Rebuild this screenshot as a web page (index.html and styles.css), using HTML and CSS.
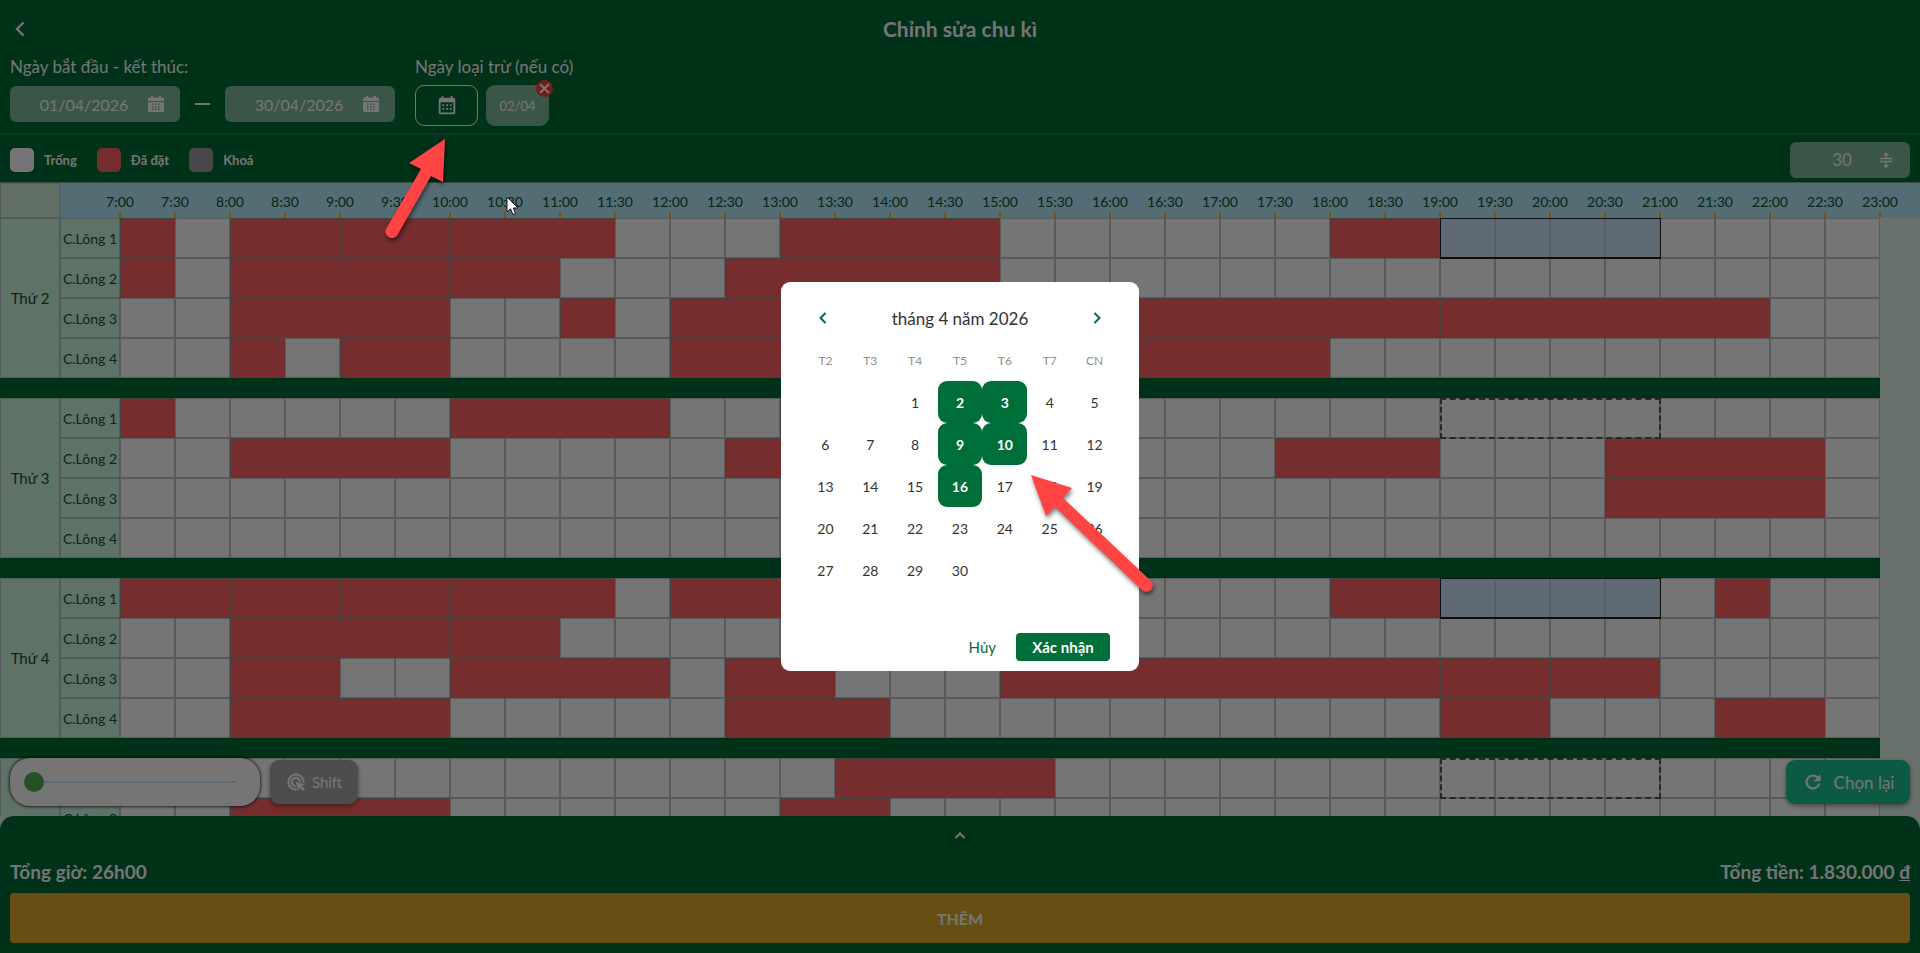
FILE: index.html
```html
<!DOCTYPE html>
<html lang="vi">
<head>
  <meta charset="utf-8">
  <title>Chỉnh sửa chu kì</title>
  <link rel="stylesheet" href="styles.css">
</head>
<body>
  <header class="topbar">
    <button class="back-btn" aria-label="Quay lại">
      <svg width="10" height="16" viewBox="0 0 10 16"><path d="M8.5 1.5L2 8l6.500 6.500" fill="none" stroke="currentColor" stroke-width="2.400"/></svg>
    </button>
    <h1 class="title">Chỉnh sửa chu kì</h1>
  </header>

  <section class="filters">
    <div class="filter-group">
      <label class="filter-label" for="startDate">Ngày bắt đầu - kết thúc:</label>
      <div class="filter-row">
        <div class="date-field">
          <input id="startDate" class="date-input" type="text" value="01/04/2026" readonly>
          <svg class="date-icon" viewBox="0 0 16 16"><path fill="currentColor" fill-rule="evenodd" d="M3 0h2v1.500h6V0h2v1.500h1.500A1.500 1.500 0 0 1 16 3v2H0V3a1.500 1.500 0 0 1 1.500-1.500H3zM0 6h16v8.500a1.500 1.500 0 0 1-1.500 1.500h-13A1.500 1.500 0 0 1 0 14.500zM7 7.500V9h1.500V7.500zM10 7.500V9h1.500V7.500zM4 10v1.500h1.500V10zM7 10v1.500h1.500V10zM10 10v1.500h1.500V10zM4 12.500V14h1.500v-1.500zM7 12.500V14h1.500v-1.500zM10 12.500V14h1.500v-1.500zM4 7.500V9h1.500V7.500z"/></svg>
        </div>
        <span class="dash"></span>
        <div class="date-field">
          <input id="endDate" class="date-input" type="text" value="30/04/2026" aria-label="Ngày kết thúc" readonly>
          <svg class="date-icon" viewBox="0 0 16 16"><path fill="currentColor" fill-rule="evenodd" d="M3 0h2v1.500h6V0h2v1.500h1.500A1.500 1.500 0 0 1 16 3v2H0V3a1.500 1.500 0 0 1 1.500-1.500H3zM0 6h16v8.500a1.500 1.500 0 0 1-1.500 1.500h-13A1.500 1.500 0 0 1 0 14.500zM7 7.500V9h1.500V7.500zM10 7.500V9h1.500V7.500zM4 10v1.500h1.500V10zM7 10v1.500h1.500V10zM10 10v1.500h1.500V10zM4 12.500V14h1.500v-1.500zM7 12.500V14h1.500v-1.500zM10 12.500V14h1.500v-1.500zM4 7.500V9h1.500V7.500z"/></svg>
        </div>
      </div>
    </div>

    <div class="filter-group">
      <span class="filter-label">Ngày loại trừ (nếu có)</span>
      <div class="filter-row exclude-row">
        <button class="exclude-btn" aria-label="Chọn ngày loại trừ">
          <svg width="22" height="22" viewBox="0 0 24 24"><path fill="currentColor" d="M9,10V12H7V10H9M13,10V12H11V10H13M17,10V12H15V10H17M19,3A2,2 0 0,1 21,5V19A2,2 0 0,1 19,21H5C3.890,21 3,20.100 3,19V5A2,2 0 0,1 5,3H6V1H8V3H16V1H18V3H19M19,19V8H5V19H19M9,14V16H7V14H9M13,14V16H11V14H13M17,14V16H15V14H17Z"/></svg>
        </button>
        <div class="exclude-chip">
          02/04
          <button class="chip-remove" aria-label="Xoá 02/04">
            <svg width="11" height="11" viewBox="0 0 11 11"><path d="M1 1l9 9M10 1l-9 9" stroke="currentColor" stroke-width="2"/></svg>
          </button>
        </div>
      </div>
    </div>
  </section>

  <section class="legend">
    <div class="legend-item"><span class="swatch swatch-free"></span>Trống</div>
    <div class="legend-item"><span class="swatch swatch-booked"></span>Đã đặt</div>
    <div class="legend-item"><span class="swatch swatch-locked"></span>Khoá</div>
    <div class="step-field">
      <select class="step-select" aria-label="Bước thời gian">
        <option>30</option>
        <option>60</option>
      </select>
      <svg class="step-icon" viewBox="0 0 12 16"><path d="M0 6.500h12M0 9.500h12M6 6.500V2M6 9.500V14" stroke="currentColor" stroke-width="1.300"/><path d="M6 0L9 3.500H3zM6 16.500L9 13H3z" fill="currentColor"/></svg>
    </div>
  </section>

  <main class="schedule">
    <table class="grid">
      <colgroup id="gridCols"></colgroup>
      <thead id="gridHead"></thead>
      <tbody id="gridBody"></tbody>
    </table>

    <div class="floating">
      <div class="zoom-box">
        <input class="zoom-range" type="range" min="0" max="100" value="0" aria-label="Thu phóng">
      </div>
      <button class="float-btn shift-btn">
        <svg width="20" height="20" viewBox="0 0 24 24"><path fill="currentColor" stroke="currentColor" stroke-width=".6" d="M11.710,17.990C8.530,17.840,6,15.220,6,12c0-3.310,2.690-6,6-6c3.220,0,5.840,2.530,5.990,5.710l-2.100-0.630C15.480,9.310,13.890,8,12,8c-2.210,0-4,1.790-4,4c0,1.890,1.310,3.480,3.080,3.890L11.710,17.990z M22,12c0,0.300-0.010,0.600-0.040,0.900l-1.970-0.590C20,12.210,20,12.100,20,12c0-4.420-3.580-8-8-8s-8,3.580-8,8s3.580,8,8,8c0.100,0,0.210,0,0.310-0.010l0.590,1.970C12.600,21.990,12.300,22,12,22C6.480,22,2,17.520,2,12C2,6.480,6.480,2,12,2S22,6.480,22,12z M18.230,16.260L22,15l-10-3l3,10l1.260-3.770l4.270,4.270l1.980-1.980L18.230,16.260z"/></svg>
        Shift
      </button>
      <button class="float-btn reset-btn">
        <svg width="22" height="22" viewBox="0 0 24 24"><path fill="currentColor" stroke="currentColor" stroke-width=".4" d="M17.650 6.350C16.200 4.900 14.210 4 12 4c-4.420 0-7.990 3.580-7.990 8s3.570 8 7.990 8c3.730 0 6.840-2.550 7.730-6h-2.080c-.82 2.330-3.040 4-5.650 4-3.310 0-6-2.690-6-6s2.690-6 6-6c1.660 0 3.140.69 4.220 1.780L13 11h7V4l-2.350 2.350z"/></svg>
        Chọn lại
      </button>
    </div>
  </main>

  <footer class="summary">
    <button class="expand-btn" aria-label="Mở rộng">
      <svg width="12" height="8" viewBox="0 0 12 8"><path d="M1.500 7L6 2.500 10.500 7" fill="none" stroke="currentColor" stroke-width="2"/></svg>
    </button>
    <div class="totals">
      <span>Tổng giờ: 26h00</span>
      <span>Tổng tiền: 1.830.000 <u>đ</u></span>
    </div>
    <button class="submit-btn">THÊM</button>
  </footer>

  <div class="backdrop">
    <div class="dialog" role="dialog" aria-modal="true" aria-label="Chọn ngày">
      <div class="month-nav">
        <button class="nav-btn" aria-label="Tháng trước">
          <svg width="8" height="12" viewBox="0 0 8 12"><path d="M6.500 1L1.500 6l5 5" fill="none" stroke="currentColor" stroke-width="2"/></svg>
        </button>
        <span class="month-name">tháng 4 năm 2026</span>
        <button class="nav-btn" aria-label="Tháng sau">
          <svg width="8" height="12" viewBox="0 0 8 12"><path d="M1.500 1l5 5-5 5" fill="none" stroke="currentColor" stroke-width="2"/></svg>
        </button>
      </div>
      <div class="weekdays">
        <span>T2</span><span>T3</span><span>T4</span><span>T5</span><span>T6</span><span>T7</span><span>CN</span>
      </div>
      <div class="days" id="days"></div>
      <div class="dialog-actions">
        <button class="cancel-btn">Hủy</button>
        <button class="confirm-btn">Xác nhận</button>
      </div>
      <svg class="arrow arrow-days" width="130" height="124" viewBox="0 0 130 124"><path d="M1 1L42 14L33 24L121 107A6 6 0 0 1 112 116L25 33L16 42Z"/></svg>
    </div>
  </div>

  <svg class="arrow arrow-exclude" width="64" height="106" viewBox="0 0 64 106"><path d="M60 1L24 25L36 31L1 91A6 6 0 0 0 13 96L46 38L58 44Z"/></svg>
  <svg class="cursor" width="13" height="20" viewBox="0 0 13 20"><path d="M1 1v15l3.500-3.200L7 18.500l2.500-1.100L7.200 12H12z" fill="#fff" stroke="#111" stroke-width="1"/></svg>

  <script src="script.js"></script>
</body>
</html>
```

FILE: styles.css
```css
* {
  box-sizing: border-box;
}

body {
  margin: 0;
  height: 100vh;
  display: flex;
  flex-direction: column;
  overflow: hidden;
  background: #e4f6eb;
  color: #fff;
  font-family: Lato, "Noto Sans", sans-serif;
  font-size: 16px;
}

button,
input,
select {
  font: inherit;
  color: inherit;
  border: none;
  background: none;
  padding: 0;
  margin: 0;
}

button {
  cursor: pointer;
}

svg {
  display: block;
}

/* Top bar */
.topbar {
  display: grid;
  grid-template-columns: 1fr auto 1fr;
  align-items: center;
  height: 57px;
  flex: none;
  padding: 0 15px;
  background: #006b38;
}

.back-btn {
  justify-self: start;
}

.title {
  margin: 0;
  font-size: 21px;
  font-weight: 700;
}

/* Filters */
.filters {
  display: flex;
  flex: none;
  gap: 20px;
  padding: 0 10px 7px;
  background: #006b38;
  border-bottom: 2px solid #1c7e4e;
}

.filter-label {
  display: block;
  font-size: 17px;
  line-height: 20px;
  margin-bottom: 8px;
}

.filter-row {
  display: flex;
  align-items: center;
  gap: 15px;
  min-height: 38px;
}

.exclude-row {
  gap: 8px;
}

.date-field {
  display: flex;
  align-items: center;
  width: 170px;
  height: 36px;
  padding-right: 16px;
  padding-left: 10px;
  border-radius: 6px;
  background: rgba(255, 255, 255, 0.24);
}

.date-input {
  flex: 1;
  min-width: 0;
  text-align: center;
  font-size: 16px;
}

.date-icon {
  width: 16px;
  height: 16px;
}

.dash {
  width: 15px;
  height: 2px;
  background: #fff;
}

.exclude-btn,
.exclude-chip {
  display: flex;
  align-items: center;
  justify-content: center;
  width: 63px;
  height: 41px;
  border-radius: 9px;
}

.exclude-btn {
  border: 1px solid #fff;
}

.exclude-chip {
  position: relative;
  background: #80b99a;
  font-size: 13px;
}

.chip-remove {
  position: absolute;
  top: -5px;
  right: -4px;
  display: flex;
  align-items: center;
  justify-content: center;
  width: 17px;
  height: 17px;
  border-radius: 50%;
  background: #f44336;
}

/* Legend */
.legend {
  display: flex;
  flex: none;
  align-items: center;
  gap: 20px;
  height: 48px;
  padding: 2px 10px 0;
  background: #006b38;
  border-bottom: 1px solid #8aa898;
}

.legend-item {
  display: flex;
  align-items: center;
  gap: 10px;
  font-size: 13px;
  font-weight: 700;
}

.swatch {
  width: 24px;
  height: 24px;
  border-radius: 5px;
}

.swatch-free {
  background: #fff;
}

.swatch-booked {
  background: #ff6262;
}

.swatch-locked {
  background: #9e9e9e;
}

.step-field {
  display: flex;
  align-items: center;
  width: 120px;
  height: 36px;
  margin-left: auto;
  padding-right: 18px;
  padding-left: 14px;
  border-radius: 6px;
  background: #80b99a;
}

.date-field {
  background: #80b99a;
}

.step-select {
  flex: 1;
  appearance: none;
  text-align: center;
  text-align-last: center;
  font-size: 17px;
}

.step-icon {
  width: 12px;
  height: 16px;
  overflow: visible;
}

/* Schedule */
.schedule {
  position: relative;
  flex: 1;
  min-height: 0;
  overflow: hidden;
}

.grid {
  width: 100%;
  table-layout: fixed;
  border-collapse: separate;
  border-spacing: 0;
  color: #0a5738;
  font-size: 14px;
}

.grid th,
.grid td {
  padding: 0;
  font-weight: 400;
  white-space: nowrap;
}

.col-label {
  width: 60px;
}

.col-slot {
  width: 55px;
}

.grid thead th {
  height: 35px;
  background: #b7ebfc;
  text-align: left;
}

.grid thead .corner {
  background: #d5f1d9;
  border: 1px solid #b5c9bb;
}

.time {
  display: inline-block;
  height: 35px;
  padding-top: 8px;
  line-height: 21px;
  vertical-align: top;
  transform: translateX(-50%);
}

.time::after {
  content: "";
  display: block;
  width: 2px;
  height: 6px;
  margin: 0 auto;
  background: #ffb71f;
}

.grid tbody th {
  height: 40px;
  background: #cff8e2;
  border: 1px solid #b0c9bc;
}

.grid tbody .day-name {
  font-size: 15px;
}

.grid td.free {
  position: relative;
  background: #fff;
  border: 1px solid #c4c4c4;
}

.grid td.booked {
  background: #ff6262;
  border: 1px solid #a08c8c;
  border-right: none;
}

.grid td.divider {
  height: 20px;
  background: #006b38;
}

.pick {
  position: absolute;
  z-index: 1;
  top: -1px;
  left: -1px;
  width: 221px;
  height: 41px;
}

.pick-on {
  background: rgba(180, 215, 255, 0.6);
  border: 1px solid #222;
  border-bottom-width: 2px;
}

.pick-off {
  border: 2px dashed #555;
}

.floating {
  position: absolute;
  left: 10px;
  right: 10px;
  bottom: 10px;
  z-index: 2;
  display: flex;
  align-items: center;
  gap: 10px;
}

.zoom-box {
  display: flex;
  align-items: center;
  width: 250px;
  height: 48px;
  padding: 0 24px 0 14px;
  border-radius: 20px;
  background: #fff;
  box-shadow: 0 0 3px 1px rgba(0, 0, 0, 0.7);
}

.zoom-range {
  width: 100%;
  height: 20px;
  appearance: none;
  background: linear-gradient(#c8e6ff, #c8e6ff) center / 100% 2px no-repeat;
}

.zoom-range::-webkit-slider-thumb {
  appearance: none;
  width: 20px;
  height: 20px;
  border-radius: 50%;
  background: #4caf50;
}

.float-btn {
  display: flex;
  align-items: center;
  justify-content: center;
  height: 44px;
  border-radius: 9px;
  box-shadow: 0 2px 5px rgba(0, 0, 0, 0.4);
}

.shift-btn {
  gap: 6px;
  width: 88px;
  background: #a8a8a8;
  font-size: 15px;
}

.reset-btn {
  gap: 10px;
  width: 124px;
  margin-left: auto;
  background: #1cc492;
  font-size: 17px;
}

/* Bottom summary */
.summary {
  display: flex;
  flex-direction: column;
  flex: none;
  padding: 13px 10px 10px;
  border-radius: 14px 14px 0 0;
  background: #006b38;
}

.expand-btn {
  align-self: center;
  padding: 2px;
}

.totals {
  display: flex;
  justify-content: space-between;
  margin: 19px 0 10px;
  font-size: 19px;
  font-weight: 700;
  line-height: 23px;
}

.submit-btn {
  height: 50px;
  border-radius: 4px;
  background: #e0ac2c;
  font-size: 16px;
  font-weight: 700;
}

/* Date dialog */
.backdrop {
  position: fixed;
  inset: 0;
  z-index: 10;
  display: flex;
  align-items: center;
  justify-content: center;
  background: rgba(0, 0, 0, 0.54);
}

.dialog {
  position: relative;
  width: 358px;
  padding: 16px 22px 10px;
  border-radius: 9px;
  background: #fff;
  color: #333;
}

.month-nav {
  display: flex;
  align-items: center;
  justify-content: space-between;
  height: 40px;
  padding: 0 8px;
}

.nav-btn {
  padding: 8px;
  color: #006e38;
}

.month-name {
  font-size: 17px;
}

.weekdays,
.days {
  display: grid;
  grid-template-columns: repeat(7, 1fr);
}

.weekdays {
  height: 43px;
  line-height: 45px;
  text-align: center;
  font-size: 12px;
  color: #8f8f8f;
}

.days {
  grid-auto-rows: 42px;
  padding-bottom: 42px;
}

.day {
  border-radius: 9px;
  font-size: 14px;
}

.day-first {
  grid-column: 3;
}

.day-selected {
  background: #006e38;
  color: #fff;
  font-weight: 700;
}

.dialog-actions {
  display: flex;
  justify-content: flex-end;
  gap: 20px;
  padding-right: 7px;
  font-size: 15px;
}

.cancel-btn {
  color: #006e38;
}

.confirm-btn {
  width: 94px;
  height: 28px;
  border-radius: 4px;
  background: #006e38;
  color: #fff;
  font-weight: 700;
}

/* Pointers */
.arrow {
  position: absolute;
  overflow: visible;
  fill: #ff4444;
  filter: drop-shadow(1px 3px 2px rgba(0, 0, 0, 0.5));
  pointer-events: none;
}

.arrow-days {
  top: 192px;
  left: 249px;
}

.arrow-exclude {
  z-index: 11;
  top: 138px;
  left: 385px;
}

.cursor {
  position: absolute;
  z-index: 11;
  top: 196px;
  left: 506px;
}
```

FILE: script.js
```js
// slots are half hours counted from 7:00
const SLOTS = 32;

const schedule = [
  { day: 'Thứ 2', courts: [
    { booked: [[0, 1], [2, 4], [4, 6], [6, 9], [12, 16], [22, 24]], pick: 'on' },
    { booked: [[0, 1], [2, 6], [6, 8], [11, 16]] },
    { booked: [[2, 6], [8, 9], [10, 16], [16, 24], [24, 30]] },
    { booked: [[2, 3], [4, 6], [10, 16], [16, 22]] },
  ] },
  { day: 'Thứ 3', courts: [
    { booked: [[0, 1], [6, 10], [12, 16]], pick: 'off' },
    { booked: [[2, 6], [11, 15], [21, 24], [27, 31]] },
    { booked: [[27, 31]] },
    { booked: [] },
  ] },
  { day: 'Thứ 4', courts: [
    { booked: [[0, 2], [2, 4], [4, 6], [6, 9], [10, 14], [22, 24], [29, 30]], pick: 'on' },
    { booked: [[2, 6], [6, 8]] },
    { booked: [[2, 4], [6, 10], [11, 13], [16, 24], [24, 26], [26, 28]] },
    { booked: [[2, 6], [11, 13], [13, 14], [24, 26], [29, 31]] },
  ] },
  { day: 'Thứ 5', courts: [
    { booked: [[13, 17]], pick: 'off' },
    { booked: [[2, 6], [12, 14]] },
    { booked: [] },
    { booked: [] },
  ] },
];

const PICK_START = 24;

function timeLabel(slot) {
  return 7 + Math.floor(slot / 2) + (slot % 2 ? ':30' : ':00');
}

function renderHead() {
  let cols = '<col class="col-label"><col class="col-label">';
  let head = '<th class="corner"></th><th></th>';
  for (let i = 0; i <= SLOTS; i++) {
    cols += i < SLOTS ? '<col class="col-slot">' : '<col>';
    head += `<th><span class="time">${timeLabel(i)}</span></th>`;
  }
  document.getElementById('gridCols').innerHTML = cols;
  document.getElementById('gridHead').innerHTML = `<tr>${head}</tr>`;
}

function renderCourt(court) {
  let html = '';
  let slot = 0;
  while (slot < SLOTS) {
    const block = court.booked.find(b => b[0] === slot);
    if (block) {
      html += `<td class="booked" colspan="${block[1] - block[0]}"></td>`;
      slot = block[1];
      continue;
    }
    const pick = court.pick && slot === PICK_START ? `<div class="pick pick-${court.pick}"></div>` : '';
    html += `<td class="free">${pick}</td>`;
    slot++;
  }
  return html;
}

function renderBody() {
  let html = '';
  schedule.forEach(group => {
    group.courts.forEach((court, i) => {
      const day = i === 0 ? `<th class="day-name" rowspan="4">${group.day}</th>` : '';
      html += `<tr>${day}<th>C.Lông ${i + 1}</th>${renderCourt(court)}</tr>`;
    });
    html += `<tr><td class="divider" colspan="${SLOTS + 2}"></td></tr>`;
  });
  document.getElementById('gridBody').innerHTML = html;
}

function renderDays() {
  const selected = [2, 3, 9, 10, 16];
  let html = '';
  for (let d = 1; d <= 30; d++) {
    let cls = 'day';
    if (d === 1) cls += ' day-first';
    if (selected.includes(d)) cls += ' day-selected';
    html += `<button class="${cls}">${d}</button>`;
  }
  document.getElementById('days').innerHTML = html;
}

renderHead();
renderBody();
renderDays();
```
